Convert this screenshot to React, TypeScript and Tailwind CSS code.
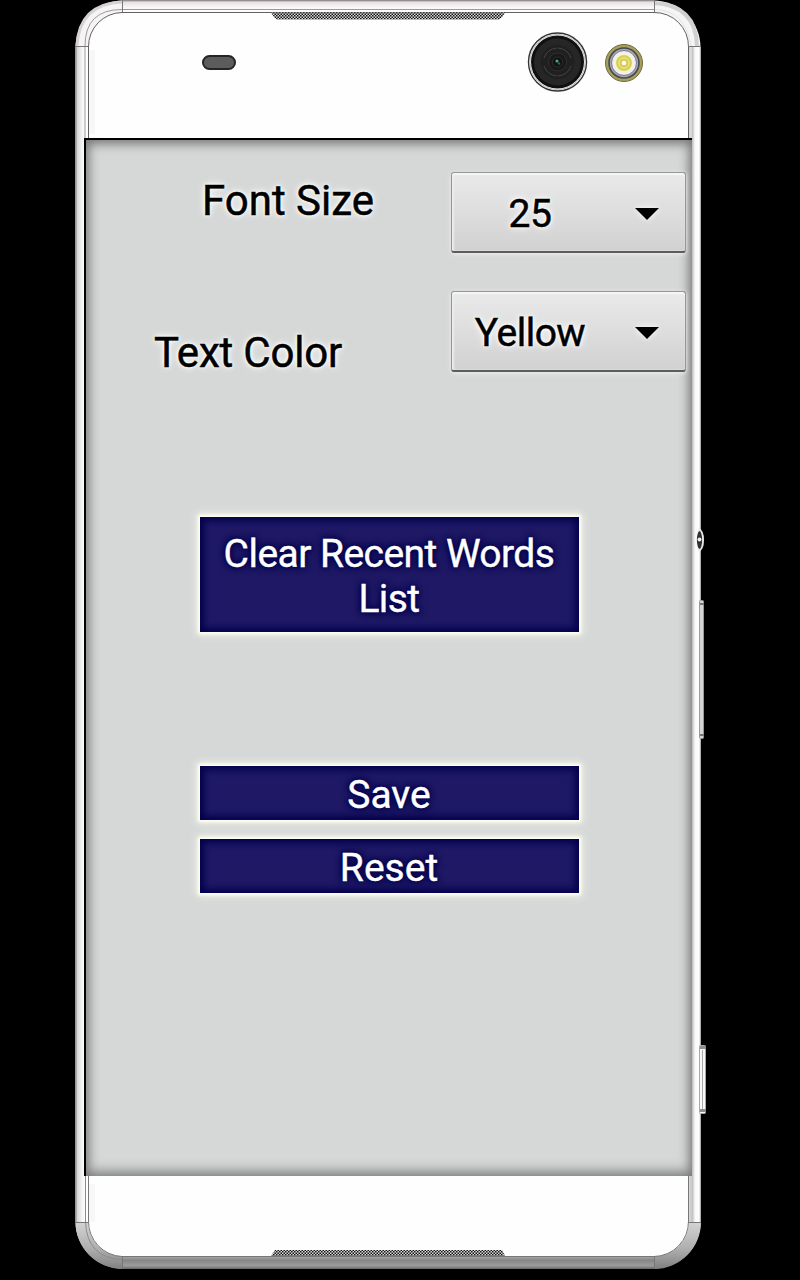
import React, { useState } from 'react';

const Shell = () => (
  <svg className="absolute left-0 top-0" width="635" height="1272" viewBox="0 0 635 1272" fill="none" aria-hidden="true">
    <defs>
      <linearGradient id="left" x1="0" x2="1" y1="0" y2="0">
        <stop offset="0" stopColor="#8a8a8a" />
        <stop offset="0.15" stopColor="#d8d6d8" />
        <stop offset="0.5" stopColor="#f4f4f4" />
        <stop offset="0.8" stopColor="#ffffff" />
        <stop offset="1" stopColor="#ffffff" />
      </linearGradient>
      <linearGradient id="right" x1="0" x2="1" y1="0" y2="0">
        <stop offset="0" stopColor="#d8d8d8" />
        <stop offset="0.3" stopColor="#c4c4c4" />
        <stop offset="0.5" stopColor="#f8f8f8" />
        <stop offset="0.85" stopColor="#ffffff" />
        <stop offset="1" stopColor="#909090" />
      </linearGradient>
      <linearGradient id="top" x1="0" x2="0" y1="0" y2="1">
        <stop offset="0" stopColor="#777777" />
        <stop offset="0.16" stopColor="#e6e0e3" />
        <stop offset="0.6" stopColor="#fbf8fa" />
        <stop offset="1" stopColor="#ffffff" />
      </linearGradient>
      <linearGradient id="bottom" x1="0" x2="0" y1="0" y2="1">
        <stop offset="0" stopColor="#b0b0b0" />
        <stop offset="0.3" stopColor="#858585" />
        <stop offset="0.75" stopColor="#9c9c9c" />
        <stop offset="1" stopColor="#666666" />
      </linearGradient>
      <linearGradient id="cornerLow" x1="0" x2="0" y1="0" y2="1">
        <stop offset="0" stopColor="#d4d4d4" />
        <stop offset="0.6" stopColor="#acacac" />
        <stop offset="1" stopColor="#808080" />
      </linearGradient>
      <pattern id="mesh" width="3" height="3" patternUnits="userSpaceOnUse">
        <rect width="3" height="3" fill="#d5d5d5" />
        <rect width="1.5" height="1.5" fill="#161616" />
        <rect x="1.5" y="1.5" width="1.5" height="1.5" fill="#161616" />
      </pattern>
    </defs>

    {/* body */}
    <rect x="0.5" y="0.5" width="625" height="1268" rx="47" fill="#f6f4f5" />
    <rect x="0.5" y="46" width="13" height="1177" fill="url(#left)" />
    <rect x="614" y="46" width="12" height="1177" fill="url(#right)" />
    <rect x="47" y="0" width="532" height="13" fill="url(#top)" />
    <rect x="47" y="1256" width="532" height="13" fill="url(#bottom)" />
    <path d="M0.5 1222A47 47 0 0 0 47 1269V1256A35 35 0 0 1 13 1222Z" fill="url(#cornerLow)" />
    <path d="M626 1222A47 47 0 0 1 579 1269V1256A35 35 0 0 0 614 1222Z" fill="url(#cornerLow)" />
    <path d="M579 3Q621 5 622 46" stroke="#d0d0d0" strokeWidth="4" />
    <path d="M47 2Q4 4 2 46" stroke="#d6d1d3" strokeWidth="3" />
    <path d="M1 46V1222" stroke="#aaaaaa" />

    {/* face plate */}
    <rect x="13" y="12.5" width="601" height="1244" rx="35" fill="#fefefe" />
    <path d="M17 50V134M17 1184V1222" stroke="#f7f7f7" strokeWidth="6" />
    <path d="M13.5 139V47A34 34 0 0 1 47 12.5H579A34 34 0 0 1 613.5 47V139" stroke="#626262" />
    <path d="M10 139V46Q10 9.5 47 9.5H579" stroke="#9b9b9b" />
    <path d="M579 9.5Q610 9.5 616 46V139" stroke="#e4e4e4" />
    <path d="M13.5 1176V1221A35 35 0 0 0 47 1256.5H579A35 35 0 0 0 613.5 1221V1176" stroke="#777777" />
    <path d="M10.5 1176V1222Q12 1258 47 1259.5H579" stroke="#8c8c8c" />

    {/* antenna seams */}
    <path d="M0 46.5H13M613 46.5H626M0 1222.5H13M613 1222.5H626M47.5 0V12M579.5 0V12M47.5 1257V1269M579.5 1257V1269" stroke="#777777" />

    {/* speaker and microphone grilles */}
    <path d="M196 12.5H430L427 17.5L424 19.5H202L199 17Z" fill="url(#mesh)" />
    <path d="M196 1256L200 1250H427L430 1256Z" fill="url(#mesh)" />

    {/* side keys */}
    <path d="M623.5 528Q629 530 629 540Q629 550 623.5 552Z" fill="#e8e8e8" />
    <ellipse cx="624.5" cy="540" rx="2.6" ry="9" fill="#303030" />
    <circle cx="624.5" cy="539.5" r="2" fill="#eeeeee" />
    <rect x="624.5" y="600.5" width="4" height="138" rx="1" fill="#d4d4d4" stroke="#9a9a9a" />
    <path d="M625 604H629M625 735H629" stroke="#777777" strokeWidth="2" />
    <rect x="624.5" y="1045.5" width="6" height="68" rx="1" fill="#f8f8f8" stroke="#a8a8a8" />
    <path d="M627.5 1050V1109" stroke="#aaaaaa" />
    <path d="M625 1047.5H631M625 1110.5H631" stroke="#8e8e8e" strokeWidth="3" />
  </svg>
);

const Lens = () => (
  <svg width="62" height="62" viewBox="0 0 62 62" fill="none" aria-hidden="true">
    <circle cx="32" cy="31.5" r="29" fill="#f5f5f5" />
    <circle cx="30.5" cy="31" r="29" fill="#fff" stroke="#333" strokeWidth="1.4" />
    <circle cx="30.5" cy="31" r="27.5" stroke="#bdbdbd" />
    <circle cx="30.5" cy="31" r="26.5" fill="#101010" />
    <circle cx="30.5" cy="31" r="23.5" fill="#262626" />
    <circle cx="30.5" cy="31" r="17" fill="#202020" />
    <path d="M17 27Q20 18 30 17M44 35Q41 44 31 45M17 35Q20 44 30 45M44 27Q41 18 31 17" stroke="#444" />
    <circle cx="30.5" cy="31" r="9" fill="#191919" stroke="#2f2f2f" />
    <circle cx="30.5" cy="31" r="5" fill="#111" stroke="#352b2d" />
    <circle cx="30" cy="30" r="1.5" fill="#50a890" />
    <circle cx="32" cy="32.5" r="1.2" fill="#176e59" />
  </svg>
);

const Flash = () => (
  <svg width="40" height="40" viewBox="0 0 40 40" fill="none" aria-hidden="true">
    <circle cx="20" cy="20" r="18.5" fill="#a5a05a" stroke="#6f6b3e" />
    <circle cx="20" cy="20" r="15" fill="#aaa8ae" stroke="#494852" strokeWidth="1.6" />
    <circle cx="20" cy="20" r="12.5" fill="#eeeef4" stroke="#77758d" />
    <circle cx="20" cy="20" r="9" fill="#d7d05b" stroke="#f7f5cf" strokeWidth="2" />
    <circle cx="20" cy="20" r="5" fill="#d6cc4c" stroke="#f2eda8" />
    <circle cx="20" cy="20" r="2.3" fill="#fffef0" />
  </svg>
);

const Spinner = ({ value, onClick }: { value: string; onClick: () => void }) => (
  <button
    onClick={onClick}
    className="flex h-[81px] w-[235px] shrink-0 items-center rounded-[3px] border border-b-2 border-[#969696] border-b-[#5c5c5c] bg-linear-to-b from-[#eaeaea] to-[#d1d1d1] pr-[25px] shadow-[inset_0_2px_1px_#f6f6f6,inset_2px_0_2px_#ededed,0_1px_4px_#eef0ee]"
  >
    <span className="flex-1 pr-[26px] pt-1 text-center text-[39px] leading-none tracking-[-0.5px] [-webkit-text-stroke:0.5px_black] [text-shadow:0_0_3px_#fff,0_0_5px_#fff,0_0_8px_#fff]">
      {value}
    </span>
    <svg className="mt-1 drop-shadow-[0_0_3px_#fff]" width="26" height="14" viewBox="0 0 26 14" aria-hidden="true">
      <path d="M1 1H25L13 13Z" fill="#000" />
    </svg>
  </button>
);

const buttonStyle =
  'w-[379px] bg-[#1e1865] text-center text-[39px] leading-[45px] text-white shadow-[inset_0_0_6px_4px_#03004c,0_0_3px_2px_#fffff4,0_0_8px_3px_#f4f5e8] [-webkit-text-stroke:0.4px_white] [text-shadow:0_0_4px_#03004c,0_0_6px_#03004c,0_0_8px_#03004c]';

const labelStyle =
  'whitespace-nowrap text-[42px] leading-[48px] [-webkit-text-stroke:0.5px_black] [text-shadow:0_0_3px_#fff,0_0_5px_#fff,0_0_8px_#fff]';

const sizes = ['25', '30', '35'];
const colors = ['Yellow', 'Red', 'Green'];

const App = () => {
  const [size, setSize] = useState(0);
  const [color, setColor] = useState(0);

  const reset = () => {
    setSize(0);
    setColor(0);
  };

  return (
    <div className="h-[1280px] w-[800px] overflow-hidden bg-black pl-[75px] font-['Roboto',sans-serif] text-black">
      <div className="relative flex h-[1269px] w-[626px] flex-col">
        <Shell />
        <header className="relative ml-[13px] flex h-[138px] w-[600px] pt-[31px]">
          <div className="ml-[114px] mt-6 h-[15px] w-[34px] rounded-full border-2 border-[#252525] bg-[#5c5c5c]" />
          <div className="ml-[291px]">
            <Lens />
          </div>
          <div className="ml-[15px] mt-3">
            <Flash />
          </div>
        </header>

        <main className="relative ml-[9px] flex h-[1038px] w-[608px] flex-col items-center border-l-2 border-t-2 border-black bg-[#d5d8d7] shadow-[inset_0_3px_12px_#747474,inset_0_-4px_13px_#858585]">
          <div className="flex h-[231px] w-full justify-between pl-[68px] pr-1.5 pt-8">
            <div className="flex flex-col pt-[5px]">
              <span className={`${labelStyle} ml-12`}>Font Size</span>
              <span className={`${labelStyle} mt-[104px] tracking-[-0.2px]`}>Text Color</span>
            </div>
            <div className="flex flex-col gap-[38px]">
              <Spinner value={sizes[size]} onClick={() => setSize((size + 1) % sizes.length)} />
              <Spinner value={colors[color]} onClick={() => setColor((color + 1) % colors.length)} />
            </div>
          </div>
          <button className={`${buttonStyle} mt-[146px] h-[115px] px-4 pt-1 tracking-[-0.55px]`}>Clear Recent Words List</button>
          <button className={`${buttonStyle} mt-[134px] h-[54px] pt-1`}>Save</button>
          <button className={`${buttonStyle} mt-[19px] h-[54px] pt-1`} onClick={reset}>
            Reset
          </button>
        </main>
      </div>
    </div>
  );
};

export default App;
